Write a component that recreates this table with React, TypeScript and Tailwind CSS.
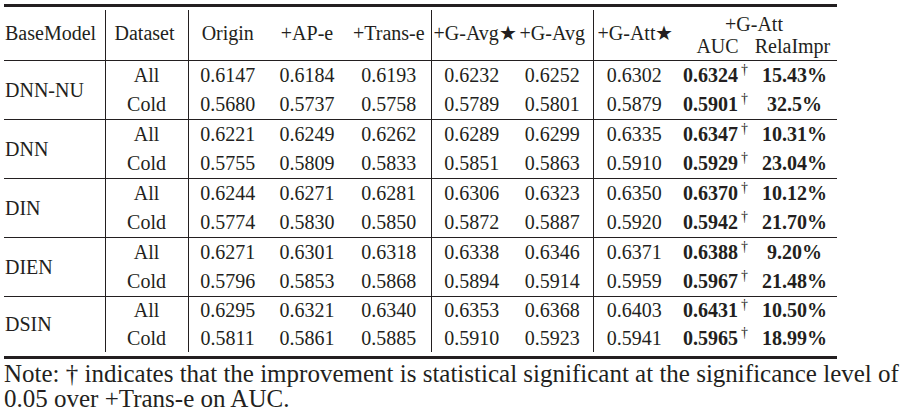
import React from 'react';

type Group = { model: string; rows: string[][] };

const groups: Group[] = [
  {
    model: 'DNN-NU',
    rows: [
      ['All', '0.6147', '0.6184', '0.6193', '0.6232', '0.6252', '0.6302', '0.6324', '15.43%'],
      ['Cold', '0.5680', '0.5737', '0.5758', '0.5789', '0.5801', '0.5879', '0.5901', '32.5%'],
    ],
  },
  {
    model: 'DNN',
    rows: [
      ['All', '0.6221', '0.6249', '0.6262', '0.6289', '0.6299', '0.6335', '0.6347', '10.31%'],
      ['Cold', '0.5755', '0.5809', '0.5833', '0.5851', '0.5863', '0.5910', '0.5929', '23.04%'],
    ],
  },
  {
    model: 'DIN',
    rows: [
      ['All', '0.6244', '0.6271', '0.6281', '0.6306', '0.6323', '0.6350', '0.6370', '10.12%'],
      ['Cold', '0.5774', '0.5830', '0.5850', '0.5872', '0.5887', '0.5920', '0.5942', '21.70%'],
    ],
  },
  {
    model: 'DIEN',
    rows: [
      ['All', '0.6271', '0.6301', '0.6318', '0.6338', '0.6346', '0.6371', '0.6388', '9.20%'],
      ['Cold', '0.5796', '0.5853', '0.5868', '0.5894', '0.5914', '0.5959', '0.5967', '21.48%'],
    ],
  },
  {
    model: 'DSIN',
    rows: [
      ['All', '0.6295', '0.6321', '0.6340', '0.6353', '0.6368', '0.6403', '0.6431', '10.50%'],
      ['Cold', '0.5811', '0.5861', '0.5885', '0.5910', '0.5923', '0.5941', '0.5965', '18.99%'],
    ],
  },
];

const widths = [101, 83, 79, 80, 84, 81, 81, 82, 77, 85];

// column index -> has a rule on its right
const ruled = (i: number) => i === 0 || i === 1 || i === 4 || i === 6;

function Dagger() {
  return <span className="relative -top-[8px] ml-[3px] text-[14px] font-normal">†</span>;
}

export default function App() {
  return (
    <div
      className="w-[904px] h-[416px] bg-white text-[#231f20] text-[20px] leading-none overflow-hidden"
      style={{ fontFamily: '"Liberation Serif", "DejaVu Serif", serif' }}
    >
      <div className="ml-[4px] w-[833px]">
        <div className="mt-[4px] h-[3px] bg-[#231f20]" />
        <table className="mt-[3px] w-[833px] table-fixed border-collapse">
          <colgroup>
            {widths.map((w, i) => (
              <col key={i} style={{ width: w }} />
            ))}
          </colgroup>
          <thead>
            <tr className="h-[25px]">
              <th rowSpan={2} className="border-r border-b border-[#231f20] pl-[1px] pb-[3px] text-left font-normal">
                BaseModel
              </th>
              <th rowSpan={2} className="border-r border-b border-[#231f20] pb-[3px] pr-[4px] text-center font-normal">
                Dataset
              </th>
              <th rowSpan={2} className="border-b border-[#231f20] pb-[3px] text-center font-normal">
                Origin
              </th>
              <th rowSpan={2} className="border-b border-[#231f20] pb-[3px] text-center font-normal">
                +AP-e
              </th>
              <th rowSpan={2} className="border-r border-b border-[#231f20] pb-[3px] text-center font-normal whitespace-nowrap">
                +Trans-e
              </th>
              <th rowSpan={2} className="border-b border-[#231f20] pb-[3px] pl-[2px] text-center font-normal whitespace-nowrap">
                +G-Avg★
              </th>
              <th rowSpan={2} className="border-r border-b border-[#231f20] pb-[3px] text-center font-normal whitespace-nowrap">
                +G-Avg
              </th>
              <th rowSpan={2} className="border-b border-[#231f20] pb-[3px] text-left pl-[4px] font-normal whitespace-nowrap">
                +G-Att★
              </th>
              <th colSpan={2} className="pt-[2px] pr-[4px] text-center font-normal">
                +G-Att
              </th>
            </tr>
            <tr className="h-[25px]">
              <th className="border-b border-[#231f20] pb-[3px] pl-[8px] text-center font-normal">AUC</th>
              <th className="border-b border-[#231f20] pb-[3px] pr-[4px] text-center font-normal">RelaImpr</th>
            </tr>
          </thead>
          <tbody>
            {groups.map((g, gi) => {
              const last = gi === groups.length - 1;
              return g.rows.map((r, ri) => {
                const bottom = ri === 1 && !last;
                const h = last ? 'h-[28px]' : ri === 0 ? 'h-[30px]' : 'h-[29px]';
                return (
                  <tr key={g.model + ri} className={h}>
                    {ri === 0 && (
                      <td
                        rowSpan={2}
                        className={`border-r border-[#231f20] pl-[1px] align-middle ${last ? '' : 'border-b'}`}
                      >
                        {g.model}
                      </td>
                    )}
                    {r.map((c, ci) => {
                      const col = ci + 1;
                      const base = `align-middle text-center whitespace-nowrap border-[#231f20] ${ruled(col) ? 'border-r' : ''} ${bottom ? 'border-b' : ''}`;
                      if (col === 8) {
                        return (
                          <td key={ci} className={`${base} font-bold pl-[4px]`}>
                            {c}
                            <Dagger />
                          </td>
                        );
                      }
                      if (col === 9) {
                        return (
                          <td key={ci} className={`${base} font-bold`}>
                            {c}
                          </td>
                        );
                      }
                      return (
                        <td key={ci} className={base}>
                          {c}
                        </td>
                      );
                    })}
                  </tr>
                );
              });
            })}
          </tbody>
        </table>
        <div className="mt-[4px] h-[3px] bg-[#231f20]" />
      </div>
      <div className="ml-[4px] mt-[2px] text-[25px] leading-[25px] whitespace-nowrap">
        <div>Note: † indicates that the improvement is statistical significant at the significance level of</div>
        <div>0.05 over +Trans-e on AUC.</div>
      </div>
    </div>
  );
}
